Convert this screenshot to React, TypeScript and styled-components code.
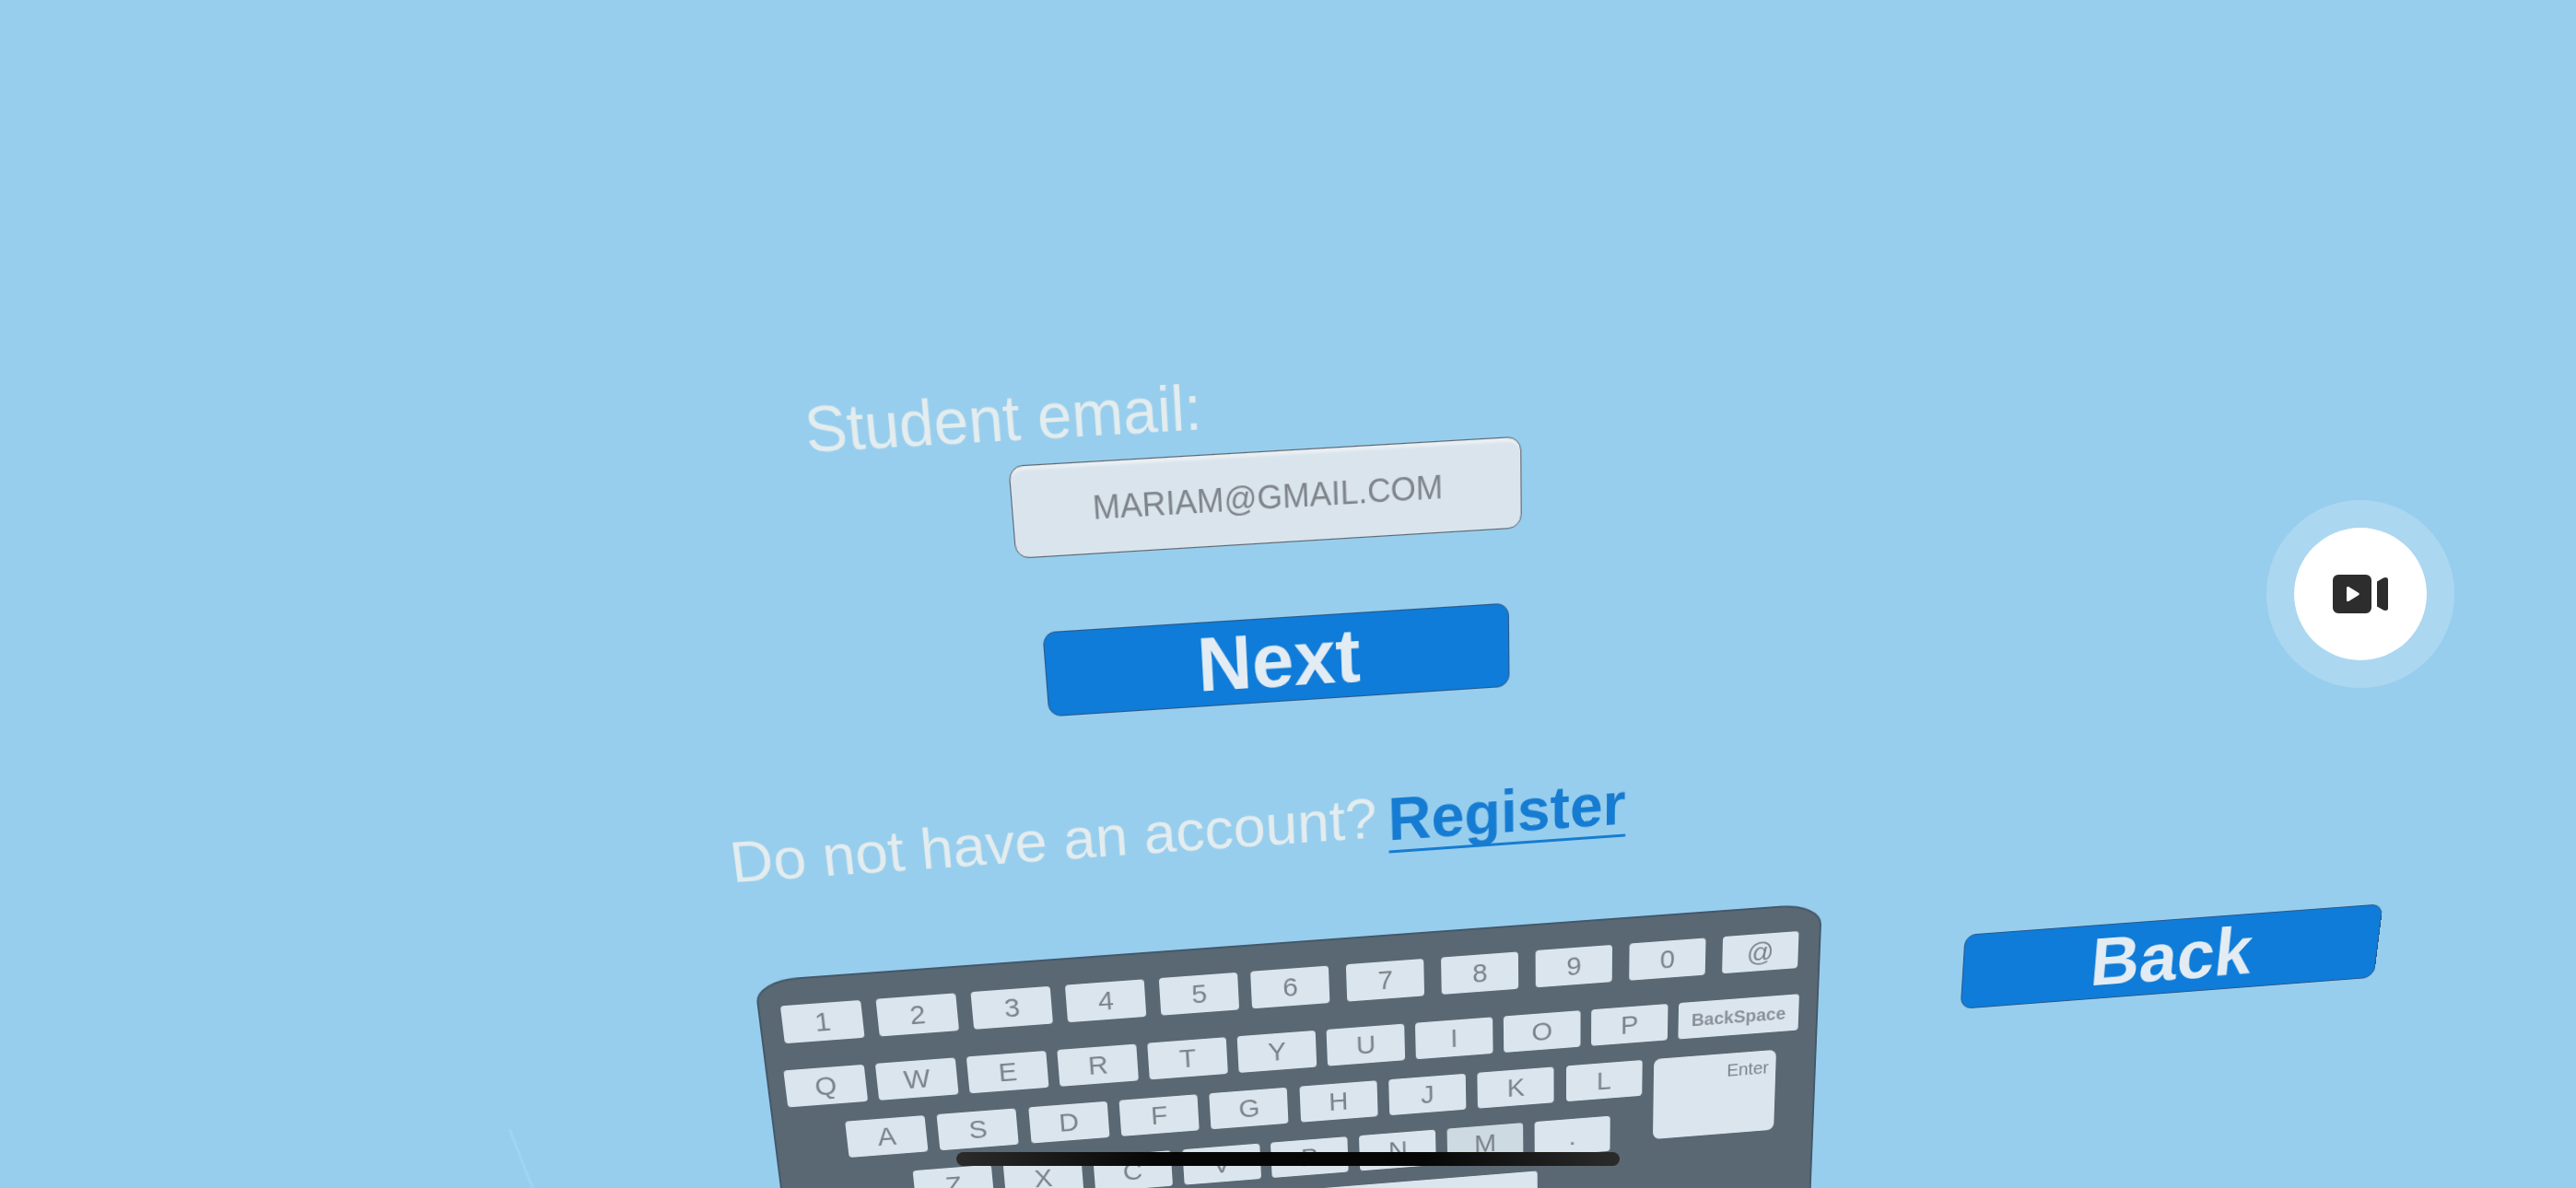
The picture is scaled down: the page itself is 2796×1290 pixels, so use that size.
import React from "react";
import styled, { createGlobalStyle } from "styled-components";

const sans = `"Liberation Sans", Arial, Helvetica, sans-serif`;
const narrow = `"Liberation Sans Narrow", "Arial Narrow", "Liberation Sans", Arial, sans-serif`;

const GlobalStyle = createGlobalStyle`
  *, *::before, *::after { box-sizing: border-box; }
  body { margin: 0; background: #98ceed; font-family: ${sans}; }
  button, input { font-family: inherit; margin: 0; padding: 0; }
`;

const Page = styled.main`
  position: relative;
  height: 100vh;
  overflow: hidden;
  background: #98ceed;
`;

/* The whole form lies on one board that is tilted away from the viewer. */
const Scene = styled.form`
  display: grid;
  grid-template-columns: 1172px 481px;
  column-gap: 162px;
  justify-content: center;
  padding-left: 645px;
  transform-origin: calc(50% + 302px) 900px;
  transform: matrix3d(1, -0.07, 0, 0.0000275, 0, 1, 0, 0.00014, 0, 0, 1, 0, 0, 0, 0, 1);
`;

const MainColumn = styled.div`
  display: flex;
  flex-direction: column;
  align-items: flex-start;
  padding-top: 414px;
`;

const SideColumn = styled.div`
  padding-top: 1050px;
`;

const FieldLabel = styled.label`
  margin-left: 130px;
  font-size: 61px;
  line-height: 72px;
  color: #e3ecee;
`;

const EmailInput = styled.input`
  width: 516px;
  height: 90px;
  margin: 9px 0 74px 325px;
  border: 1px solid #59636d;
  border-radius: 14px;
  background: #dae4ed;
  box-shadow: inset 0 5px 2px -1px #e9eff3;
  font-size: 33px;
  text-align: center;
  color: #7e848a;
  outline: none;
`;

const ActionButton = styled.button<{ $indent?: number }>`
  display: block;
  width: 481px;
  height: 86px;
  margin-left: ${(p) => p.$indent ?? 0}px;
  border: 1px solid #2a5688;
  border-radius: 13px;
  background: #0e7cd8;
  font-size: 78px;
  font-weight: 700;
  line-height: 82px;
  color: #e4ecf3;
`;

const RegisterLine = styled.p`
  display: flex;
  align-items: flex-start;
  gap: 12px;
  margin: 93px 0 86px 5px;
  font-size: 61px;
  line-height: 72px;
  white-space: nowrap;
  color: #e3ecee;
`;

const RegisterLink = styled.a`
  font-size: 64px;
  font-weight: 700;
  line-height: 78px;
  color: #167cd2;
  text-decoration: underline;
  text-decoration-thickness: 3px;
  text-decoration-skip-ink: none;
  text-underline-offset: 11px;
`;

const Keyboard = styled.div`
  width: 1157px;
  height: 460px;
  margin-left: 14px;
  padding: 28px 20px 0 17px;
  border: 2px solid #43586b;
  border-radius: 46px / 24px;
  background: #5a6873;
`;

const KeyRow = styled.div<{ $start?: number; $end?: number; $below?: number }>`
  display: flex;
  justify-content: space-between;
  height: 42px;
  margin: 0 ${(p) => p.$end ?? 0}px ${(p) => p.$below ?? 21}px ${(p) => p.$start ?? 0}px;
`;

const KeyCluster = styled.div<{ $gap: number }>`
  display: flex;
  gap: ${(p) => p.$gap}px;
`;

const Key = styled.button<{ $width?: number; $pressed?: boolean }>`
  flex: none;
  width: ${(p) => p.$width ?? 85}px;
  height: 42px;
  border: 0;
  border-radius: 4px;
  background: ${(p) => (p.$pressed ? "#cddae1" : "#dae5ee")};
  font-family: ${narrow};
  font-size: 30px;
  line-height: 42px;
  color: #7b828a;
`;

const WordKey = styled(Key)`
  font-family: ${sans};
  font-size: 20px;
  font-weight: 700;
  line-height: 42px;
  color: #8b9198;
`;

const EnterKey = styled(Key)`
  display: flex;
  align-items: flex-start;
  justify-content: flex-end;
  height: 95px;
  padding: 6px 8px 0 0;
  border-radius: 8px;
  font-size: 20px;
  line-height: 28px;
`;

const CallButton = styled.button`
  position: absolute;
  top: 50%;
  right: 132px;
  display: grid;
  place-items: center;
  width: 204px;
  height: 204px;
  margin-top: -102px;
  border: 30px solid rgba(255, 255, 255, 0.2);
  border-radius: 50%;
  background: #fff;
  background-clip: padding-box;
`;

const HomeIndicator = styled.div`
  position: absolute;
  bottom: 24px;
  left: 50%;
  width: 720px;
  height: 15px;
  margin-left: -360px;
  border-radius: 8px;
  background: linear-gradient(90deg, #2b2b2b, #060606 30%, #060606 70%, #2b2b2b);
`;

const Streak = styled.svg`
  position: absolute;
  left: 550px;
  bottom: 0;
`;

const Keys = ({ labels, width }: { labels: string; width?: number }) => (
  <>
    {labels.split("").map((label) => (
      <Key key={label} type="button" $width={width} $pressed={label === "M"}>
        {label}
      </Key>
    ))}
  </>
);

export default function App() {
  return (
    <>
      <GlobalStyle />
      <Page>
        <Streak width="30" height="64" viewBox="0 0 30 64" aria-hidden="true">
          <path d="M3 0 28 64" stroke="#9fd5f2" strokeWidth="3" />
        </Streak>
        <Scene onSubmit={(e) => e.preventDefault()}>
          <MainColumn>
            <FieldLabel htmlFor="email">Student email:</FieldLabel>
            <EmailInput id="email" type="text" defaultValue="MARIAM@GMAIL.COM" />
            <ActionButton type="submit" $indent={346}>
              Next
            </ActionButton>
            <RegisterLine>
              Do not have an account?
              <RegisterLink href="#register">Register</RegisterLink>
            </RegisterLine>
            <Keyboard>
              <KeyRow $start={5} $end={3} $below={30}>
                <KeyCluster $gap={16}>
                  <Keys labels="12345" />
                </KeyCluster>
                <KeyCluster $gap={19}>
                  <Keys labels="67890@" />
                </KeyCluster>
              </KeyRow>
              <KeyRow>
                <Keys labels="QWERTYUIOP" width={86} />
                <WordKey type="button" $width={136}>
                  BackSpace
                </WordKey>
              </KeyRow>
              <KeyRow $start={59} $end={24}>
                <Keys labels="ASDFGHJKL" width={86} />
                <EnterKey type="button" $width={139}>
                  Enter
                </EnterKey>
              </KeyRow>
              <KeyRow $start={126} $end={212} $below={17}>
                <Keys labels="ZXCVBNM." width={86} />
              </KeyRow>
              <KeyRow $start={292}>
                <Key type="button" $width={529} aria-label="Space" />
              </KeyRow>
            </Keyboard>
          </MainColumn>
          <SideColumn>
            <ActionButton type="button">Back</ActionButton>
          </SideColumn>
        </Scene>
        <CallButton type="button" aria-label="Record video">
          <svg width="60" height="42" viewBox="0 0 60 42" aria-hidden="true">
            <path
              fill="#2d2d2d"
              fillRule="evenodd"
              d="M6 0h30a6 6 0 0 1 6 6v30a6 6 0 0 1-6 6H6a6 6 0 0 1-6-6V6a6 6 0 0 1 6-6Zm9 14.500v13c0 1.500 1.300 2 2.500 1.300l10.500-6.500c1-.6 1-2 0-2.600L17.500 13.200c-1.200-.7-2.500-.2-2.500 1.300Z"
            />
            <path
              fill="#2d2d2d"
              d="m48 7.500 7-4c1.600-.8 5-.8 5 2v31c0 2.800-3.400 2.800-5 2l-7-4Z"
            />
          </svg>
        </CallButton>
        <HomeIndicator />
      </Page>
    </>
  );
}
